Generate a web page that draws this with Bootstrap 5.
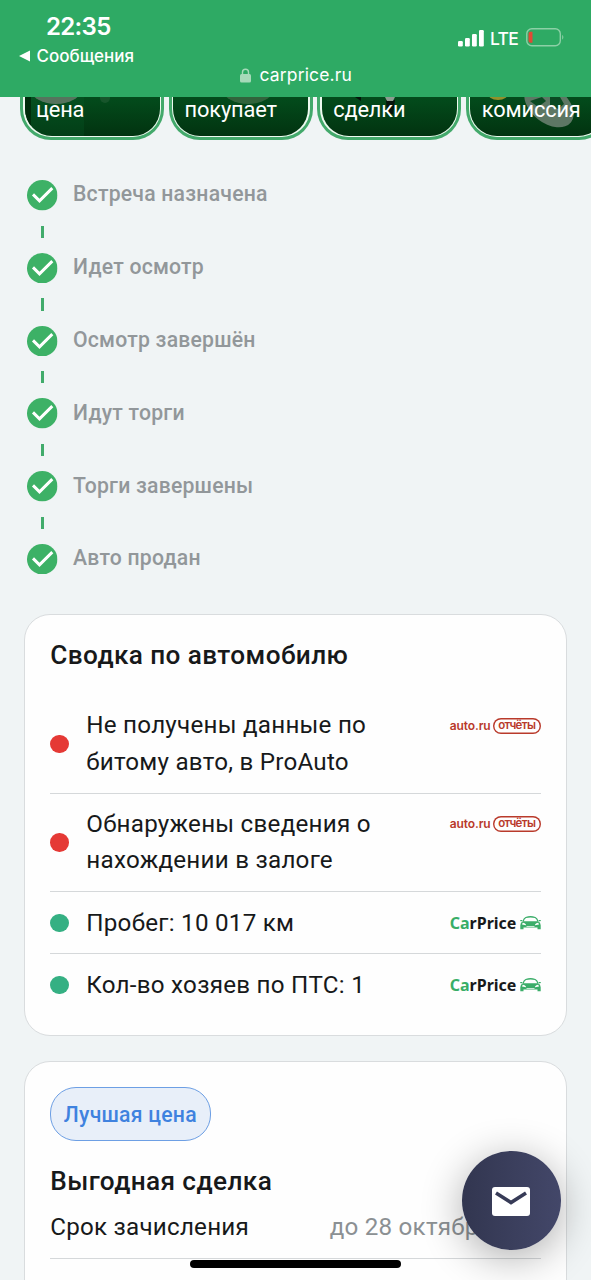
<!DOCTYPE html>
<html lang="ru">
<head>
<meta charset="utf-8">
<meta name="viewport" content="width=device-width, initial-scale=1">
<title>CarPrice</title>
<link href="https://cdn.jsdelivr.net/npm/bootstrap@5.3.0/dist/css/bootstrap.min.css" rel="stylesheet">
<style>
html, body { height: 100%; overflow: hidden; }
body { font-family: Roboto, "Noto Sans", sans-serif; background: #f0f4f5; color: #17191a; }
.screen { height: 1280px; overflow: hidden; }
.topbar { height: 97px; background: #2eaa64; font-family: Inter, Roboto, sans-serif; }
.left-status { padding-left: 19px; width: 200px; }
.clock { font-size: 24px; font-weight: 600; line-height: 28px; margin: 13px 0 0 27px; letter-spacing: -.65px; }
.back { font-size: 17px; line-height: 22px; margin-top: 4px; letter-spacing: 0; font-weight: 500; }
.right-status { padding: 26px 27px 0 0; }
.lte { font-size: 17.5px; line-height: 25px; letter-spacing: -.7px; font-weight: 500; }
.address { font-size: 17.5px; line-height: 24px; bottom: 10px; letter-spacing: .15px; padding-left: 1px; }
.stories { height: 43px; padding-left: 20px; gap: 4.6px; overflow: hidden; }
.story { width: 144px; height: 43px; border: 3px solid #43a96b; border-top: 0; border-radius: 0 0 31px 31px; padding: 0 1.5px 1.5px; background: #eefaf0; }
.story-in { height: 100%; border-radius: 0 0 27px 27px; background: linear-gradient(#034c1c, #023310); color: #fff; font-size: 21.8px; line-height: 25px; padding-left: 11.5px; overflow: hidden; white-space: nowrap; letter-spacing: -.15px; }
.story-in svg { left: 0; top: 0; }
.steps { padding: 40px 0 0 27px; }
.step { height: 30.5px; gap: 15.5px; color: #92979a; font-size: 21.2px; font-weight: 500; line-height: 30px; letter-spacing: .22px; }
.step span { position: relative; top: -.8px; }
.dash { width: 3px; height: 12.3px; background: #41ab6b; margin: 15px 0 15px 14px; }
.panel { margin: 0 24px; border: 1px solid #d9dcde; border-radius: 26px; background: #fefefe; padding: 0 25.3px; }
.panel h2 { font-size: 26.2px; font-weight: 500; line-height: 36px; letter-spacing: .4px; margin: 0; }
.fact { font-size: 24.2px; line-height: 36.4px; letter-spacing: .24px; border-bottom: 1px solid #d5d8da; padding: 12.4px 0 12.4px; white-space: nowrap; }
.fact:last-child { border-bottom: 0; }
.dot { width: 18.5px; height: 18.5px; border-radius: 50%; margin-right: 17.5px; }
.bad { background: #e53935; }
.good { background: #35b083; }
.logo { height: 36.4px; width: 91px; display: flex; align-items: center; justify-content: space-between; }
.autoru { color: #b93a2b; font: 600 12px/16px Inter, sans-serif; letter-spacing: -.1px; }
.autoru .pill { box-shadow: inset 0 0 0 1.4px #b93a2b; border-radius: 8px; width: 48px; height: 16px; font-weight: 600; font-size: 11.5px; line-height: 15px; text-align: center; letter-spacing: -.65px; }
.carprice { font: 700 16px/20px "Noto Sans", sans-serif; letter-spacing: 0; }
.carprice b { color: #38ae67; font-weight: 700; }
.chip { height: 54px; border: 1px solid #6d9fe4; border-radius: 26px; background: #e8eff9; color: #3f82df; font-size: 21.2px; font-weight: 500; letter-spacing: .24px; padding: 0 13px 0 12.5px; }
.term { font-size: 24.2px; line-height: 36px; letter-spacing: .22px; height: 50px; border-bottom: 1px solid #d5d8da; }
.date { color: #8b9093; width: 211px; }
.fab { left: 462px; top: 1151px; width: 98.5px; height: 98.5px; border-radius: 50%; background: linear-gradient(90deg, #323650, #434769); box-shadow: 0 8px 42px rgba(0,0,0,.32); }
.home { left: 190px; top: 1260px; width: 211px; height: 8px; border-radius: 4px; background: #000; }
</style>
</head>
<body>
<svg width="0" height="0" class="position-absolute">
  <symbol id="ok" viewBox="0 0 30.5 30.5"><circle cx="15.25" cy="15.25" r="15.25" fill="#3db166"/><path d="M6 14.400l6.500 6.500 12.800-12.800" fill="none" stroke="#fff" stroke-width="2.900"/></symbol>
  <symbol id="car" viewBox="0 0 21 14"><g fill="#3bad69"><path d="M3 5.500Q4 2.300 5.800 1.500Q10.500 0 15.200 1.500Q17 2.300 18 5.500" fill="none" stroke="#3bad69" stroke-width="1.300"/><path d="M0 4h2.300v1.300H.6zM21 4h-2.300v1.300h1.700z"/><path fill-rule="evenodd" d="M3 5.300h15Q20.700 6.500 20.700 9.300v4h-3.200v-1.700h-14v1.700H.3v-4Q.3 6.500 3 5.300zM2.700 6.800l-.7 1.700 4 .8q0-2-3.300-2.500zM18.300 6.800l.7 1.700-4 .8q0-2 3.300-2.500zM6.500 10h8v.7h-8z"/></g></symbol>
</svg>
<div class="screen position-relative">
  <header class="topbar position-relative d-flex justify-content-between text-white">
    <div class="left-status">
      <div class="clock">22:35</div>
      <div class="back d-flex align-items-center"><svg width="17.5" height="12" viewBox="0 0 17.5 12"><path d="M0 6L11 .5v11z" fill="#fff"/></svg><span>Сообщения</span></div>
    </div>
    <div class="right-status d-flex align-items-start">
      <svg width="27" height="18" viewBox="0 0 27 18" class="mt-1" fill="#fff" style="margin-right:5px"><rect y="11" width="4.800" height="5.500" rx="1.200"/><rect x="7" y="8" width="4.800" height="8.500" rx="1.200"/><rect x="14" y="4" width="4.800" height="12.500" rx="1.200"/><rect x="21" y="0" width="4.800" height="16.500" rx="1.200"/></svg>
      <span class="lte">LTE</span>
      <svg width="39" height="20" viewBox="0 0 39 20" style="margin:1px -1px 0 8px"><rect x=".8" y="1.800" width="33.500" height="17" rx="5" fill="none" stroke="#8cd0a6" stroke-width="1.400"/><path d="M36.200 7.800q2.400 2.500 0 5z" fill="#8cd0a6"/><path d="M4 4.800h2.500v11H4q-1.500 0-1.500-2v-7q0-2 1.500-2z" fill="#e04a35"/></svg>
    </div>
    <div class="address position-absolute start-0 end-0 d-flex justify-content-center align-items-center">
      <svg width="11" height="15" viewBox="0 0 11 15" style="margin-right:8.500px"><rect x="0" y="6" width="11" height="8.500" rx="1.500" fill="#a6dab9"/><path d="M2.500 7V4.200a3 3 0 0 1 6 0V7" fill="none" stroke="#a6dab9" stroke-width="1.400"/></svg><span>carprice.ru</span>
    </div>
  </header>
  <div class="stories d-flex">
    <div class="story flex-shrink-0"><div class="story-in position-relative"><svg class="position-absolute" width="135" height="40"><rect width="6" height="30" fill="#002d0c"/><path d="M6 0h53v40H6z" fill="#07602a" opacity=".25"/><ellipse cx="31" cy="-9" rx="26" ry="16" fill="#55745d"/><circle cx="80" cy="1" r="5" fill="#2b623c" opacity=".5"/></svg><span class="position-relative">цена</span></div></div>
    <div class="story flex-shrink-0"><div class="story-in position-relative"><svg class="position-absolute" width="135" height="40"><ellipse cx="75" cy="-9" rx="26" ry="16" fill="#31643c"/></svg><span class="position-relative">покупает</span></div></div>
    <div class="story flex-shrink-0"><div class="story-in position-relative"><svg class="position-absolute" width="135" height="40"><path d="M33 0h6v4zM64 3h9l-2 14h-6z" fill="#06130b"/><path d="M63 0h10l-2 4h-6z" fill="#8d9d91"/></svg><span class="position-relative">сделки</span></div></div>
    <div class="story flex-shrink-0"><div class="story-in position-relative"><svg class="position-absolute" width="135" height="40"><ellipse cx="28" cy="-5" rx="11" ry="8" fill="#92912b"/><ellipse cx="79" cy="8" rx="28" ry="18" transform="rotate(38 79 8)" fill="#5d7764"/><path d="M60 4l12-4 4 4-8 6zM80 0h10l4 7-6 5-8-4z" fill="#0a4a22"/></svg><span class="position-relative">комиссия</span></div></div>
  </div>
  <section class="steps">
    <div class="step d-flex align-items-center"><svg width="30.500" height="30.500"><use href="#ok"/></svg><span>Встреча назначена</span></div>
    <div class="dash"></div>
    <div class="step d-flex align-items-center"><svg width="30.500" height="30.500"><use href="#ok"/></svg><span>Идет осмотр</span></div>
    <div class="dash"></div>
    <div class="step d-flex align-items-center"><svg width="30.500" height="30.500"><use href="#ok"/></svg><span>Осмотр завершён</span></div>
    <div class="dash"></div>
    <div class="step d-flex align-items-center"><svg width="30.500" height="30.500"><use href="#ok"/></svg><span>Идут торги</span></div>
    <div class="dash"></div>
    <div class="step d-flex align-items-center"><svg width="30.500" height="30.500"><use href="#ok"/></svg><span>Торги завершены</span></div>
    <div class="dash"></div>
    <div class="step d-flex align-items-center"><svg width="30.500" height="30.500"><use href="#ok"/></svg><span>Авто продан</span></div>
  </section>
  <section class="panel" style="margin-top:39.500px;height:422.500px;padding-top:22px">
    <h2>Сводка по автомобилю</h2>
    <div style="padding-top:22px">
      <div class="fact d-flex align-items-center"><i class="dot bad"></i><div>Не получены данные по<br>битому авто, в ProAuto</div><div class="logo autoru ms-auto align-self-start"><span>auto.ru</span><span class="pill">отчёты</span></div></div>
      <div class="fact d-flex align-items-center"><i class="dot bad"></i><div>Обнаружены сведения о<br>нахождении в залоге</div><div class="logo autoru ms-auto align-self-start"><span>auto.ru</span><span class="pill">отчёты</span></div></div>
      <div class="fact d-flex align-items-center"><i class="dot good"></i><div>Пробег: 10 017 км</div><div class="logo carprice ms-auto"><span><b>Ca</b>rPrice</span><svg width="21" height="14"><use href="#car"/></svg></div></div>
      <div class="fact d-flex align-items-center"><i class="dot good"></i><div>Кол-во хозяев по ПТС: 1</div><div class="logo carprice ms-auto"><span><b>Ca</b>rPrice</span><svg width="21" height="14"><use href="#car"/></svg></div></div>
    </div>
  </section>
  <section class="panel" style="margin-top:25px;height:260px;padding-top:25px">
    <div class="chip d-inline-flex align-items-center">Лучшая цена</div>
    <h2 style="margin-top:22px">Выгодная сделка</h2>
    <div class="term d-flex justify-content-between" style="margin-top:10px"><span>Срок зачисления</span><span class="date">до 28 октября</span></div>
  </section>
  <button class="fab position-absolute border-0 d-flex align-items-center justify-content-center p-0" aria-label="Написать"><svg width="38" height="29" viewBox="0 0 38 29" style="margin-top:2px"><rect width="38" height="29" rx="3" fill="#fff"/><path d="M4 6l15 9.500L34 6" fill="none" stroke="#373b57" stroke-width="3.600"/></svg></button>
  <div class="home position-absolute"></div>
</div>
<script src="https://cdn.jsdelivr.net/npm/bootstrap@5.3.0/dist/js/bootstrap.bundle.min.js"></script>
</body>
</html>
